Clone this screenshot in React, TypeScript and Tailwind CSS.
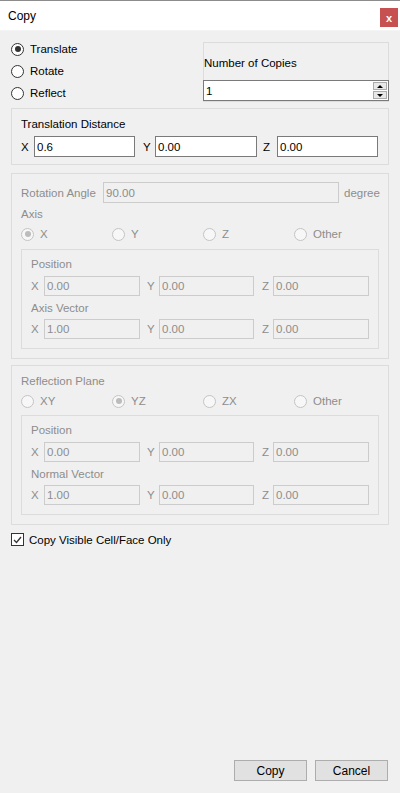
import React from "react";

const FONT = { fontFamily: '"Liberation Sans", Arial, sans-serif' };

function Radio({ label, checked = false, disabled = false, className = "" }: { label: string; checked?: boolean; disabled?: boolean; className?: string }) {
  return (
    <div className={`flex items-center ${className}`}>
      <div
        className={`w-[13px] h-[13px] rounded-full border flex items-center justify-center shrink-0 ${
          disabled ? "border-[#c4c4c4] bg-[#f7f7f7]" : "border-[#333333] bg-white"
        }`}
      >
        {checked && <div className={`w-[6px] h-[6px] rounded-full ${disabled ? "bg-[#bcbcbc]" : "bg-[#333333]"}`} />}
      </div>
      <span className={`ml-[6px] ${disabled ? "text-[#8d8d8d]" : "text-black"}`}>{label}</span>
    </div>
  );
}

function Field({ value, width, disabled = false, h = "h-[21px]" }: { value: string; width: string; disabled?: boolean; h?: string }) {
  return (
    <div
      className={`${width} ${h} border flex items-center pl-[2px] shrink-0 ${
        disabled ? "border-[#cccccc] bg-[#f0f0f0] text-[#8d8d8d]" : "border-[#7a7a7a] bg-white text-black"
      }`}
    >
      {value}
    </div>
  );
}

// X / Y / Z row inside an outer group
function OuterXYZ({ x, y, z }: { x: string; y: string; z: string }) {
  return (
    <div className="flex items-center mt-[5px]">
      <span className="w-[13px] shrink-0">X</span>
      <Field value={x} width="w-[101px]" />
      <span className="ml-[8px] w-[12px] shrink-0">Y</span>
      <Field value={y} width="w-[102px]" />
      <span className="ml-[6px] w-[14px] shrink-0">Z</span>
      <Field value={z} width="w-[101px]" />
    </div>
  );
}

// disabled X / Y / Z row inside an inner group
function InnerXYZ({ x, y, z, mt }: { x: string; y: string; z: string; mt: string }) {
  return (
    <div className={`flex items-center text-[#8d8d8d] ${mt}`}>
      <span className="w-[13px] shrink-0">X</span>
      <Field value={x} width="w-[96px]" disabled h="h-[20px]" />
      <span className="ml-[7px] w-[12px] shrink-0">Y</span>
      <Field value={y} width="w-[95px]" disabled h="h-[20px]" />
      <span className="ml-[8px] w-[11px] shrink-0">Z</span>
      <Field value={z} width="w-[96px]" disabled h="h-[20px]" />
    </div>
  );
}

function InnerGroup({ first, second, secondVals, mt }: { first: string; second: string; secondVals: string[]; mt: string }) {
  return (
    <div className={`mx-[9px] border border-[#dcdcdc] pl-[9px] pt-[7px] pb-[9px] ${mt}`}>
      <div className="h-[14px] leading-[14px] text-[#8d8d8d]">{first}</div>
      <InnerXYZ x="0.00" y="0.00" z="0.00" mt="mt-[5px]" />
      <div className="h-[14px] leading-[14px] mt-[5px] text-[#8d8d8d]">{second}</div>
      <InnerXYZ x={secondVals[0]} y={secondVals[1]} z={secondVals[2]} mt="mt-[4px]" />
    </div>
  );
}

export default function App() {
  return (
    <div className="w-[400px] h-[793px] bg-[#f0f0f0] flex flex-col text-[11.5px] leading-[14px] text-black" style={FONT}>
      {/* title bar */}
      <div className="h-[31px] bg-white border-t border-[#8c8c8c] flex items-start justify-between border-b border-b-[#f4f4f4]">
        <span className="ml-[8px] mt-[8px] text-[12px]">Copy</span>
        <div className="mt-[7px] mr-[2px] w-[18px] h-[19px] bg-[#c75050] flex items-center justify-center text-white font-bold text-[11px]">
          x
        </div>
      </div>

      {/* mode + copies */}
      <div className="flex items-start h-[71px]">
        <div className="pl-[11px] pt-[7px] flex flex-col">
          <Radio label="Translate" checked className="h-[22px]" />
          <Radio label="Rotate" className="h-[22px]" />
          <Radio label="Reflect" className="h-[22px]" />
        </div>
        <div className="ml-auto mr-[11px] mt-[11px] w-[186px] h-[60px] border border-[#dcdcdc] flex flex-col">
          <div className="pt-[13px] h-[38px]">Number of Copies</div>
          <div className="-ml-[1px] -mr-[1px] h-[21px] border border-[#7a7a7a] bg-white flex items-center pl-[2px]">
            <span className="flex-1">1</span>
            <div className="flex flex-col mr-[1px] gap-[1px]">
              <div className="w-[14px] h-[8px] border border-[#ababab] bg-[#e8e8e8] flex items-center justify-center">
                <div className="w-0 h-0 border-l-[3px] border-r-[3px] border-b-[3px] border-l-transparent border-r-transparent border-b-black" />
              </div>
              <div className="w-[14px] h-[8px] border border-[#ababab] bg-[#e8e8e8] flex items-center justify-center">
                <div className="w-0 h-0 border-l-[3px] border-r-[3px] border-t-[3px] border-l-transparent border-r-transparent border-t-black" />
              </div>
            </div>
          </div>
        </div>
      </div>

      {/* translation distance */}
      <div className="mx-[11px] mt-[6px] border border-[#dcdcdc] pl-[9px] pt-[8px] pb-[7px]">
        <div className="h-[14px] leading-[14px]">Translation Distance</div>
        <OuterXYZ x="0.6" y="0.00" z="0.00" />
      </div>

      {/* rotation */}
      <div className="mx-[11px] mt-[8px] border border-[#dcdcdc] pt-[8px] pb-[9px] text-[#8d8d8d]">
        <div className="flex items-center pl-[9px] h-[21px]">
          <span className="w-[82px] shrink-0">Rotation Angle</span>
          <Field value="90.00" width="w-[236px]" disabled />
          <span className="ml-[5px] shrink-0">degree</span>
        </div>
        <div className="pl-[9px] mt-[4px] h-[14px]">Axis</div>
        <div className="pl-[9px] mt-[3px] h-[20px] flex items-center">
          <Radio label="X" checked disabled className="w-[91px]" />
          <Radio label="Y" disabled className="w-[91px]" />
          <Radio label="Z" disabled className="w-[91px]" />
          <Radio label="Other" disabled />
        </div>
        <InnerGroup first="Position" second="Axis Vector" secondVals={["1.00", "0.00", "0.00"]} mt="mt-[5px]" />
      </div>

      {/* reflection */}
      <div className="mx-[11px] mt-[6px] border border-[#dcdcdc] pt-[8px] pb-[9px] text-[#8d8d8d]">
        <div className="pl-[9px] h-[14px]">Reflection Plane</div>
        <div className="pl-[9px] mt-[3px] h-[20px] flex items-center">
          <Radio label="XY" disabled className="w-[91px]" />
          <Radio label="YZ" checked disabled className="w-[91px]" />
          <Radio label="ZX" disabled className="w-[91px]" />
          <Radio label="Other" disabled />
        </div>
        <InnerGroup first="Position" second="Normal Vector" secondVals={["1.00", "0.00", "0.00"]} mt="mt-[4px]" />
      </div>

      {/* visible only */}
      <div className="ml-[11px] mt-[8px] h-[13px] flex items-center">
        <div className="w-[13px] h-[13px] border border-[#333333] bg-white flex items-center justify-center">
          <svg width="9" height="8" viewBox="0 0 9 8">
            <path d="M1 4 L3.5 6.5 L8 1" fill="none" stroke="#333333" strokeWidth="1.3" />
          </svg>
        </div>
        <span className="ml-[5px]">Copy Visible Cell/Face Only</span>
      </div>

      {/* buttons */}
      <div className="mt-auto mb-[12px] mr-[12px] flex justify-end gap-[8px]">
        <button className="w-[73px] h-[21px] border border-[#adadad] bg-[#e1e1e1] text-[12px]">Copy</button>
        <button className="w-[73px] h-[21px] border border-[#adadad] bg-[#e1e1e1] text-[12px]">Cancel</button>
      </div>
    </div>
  );
}
